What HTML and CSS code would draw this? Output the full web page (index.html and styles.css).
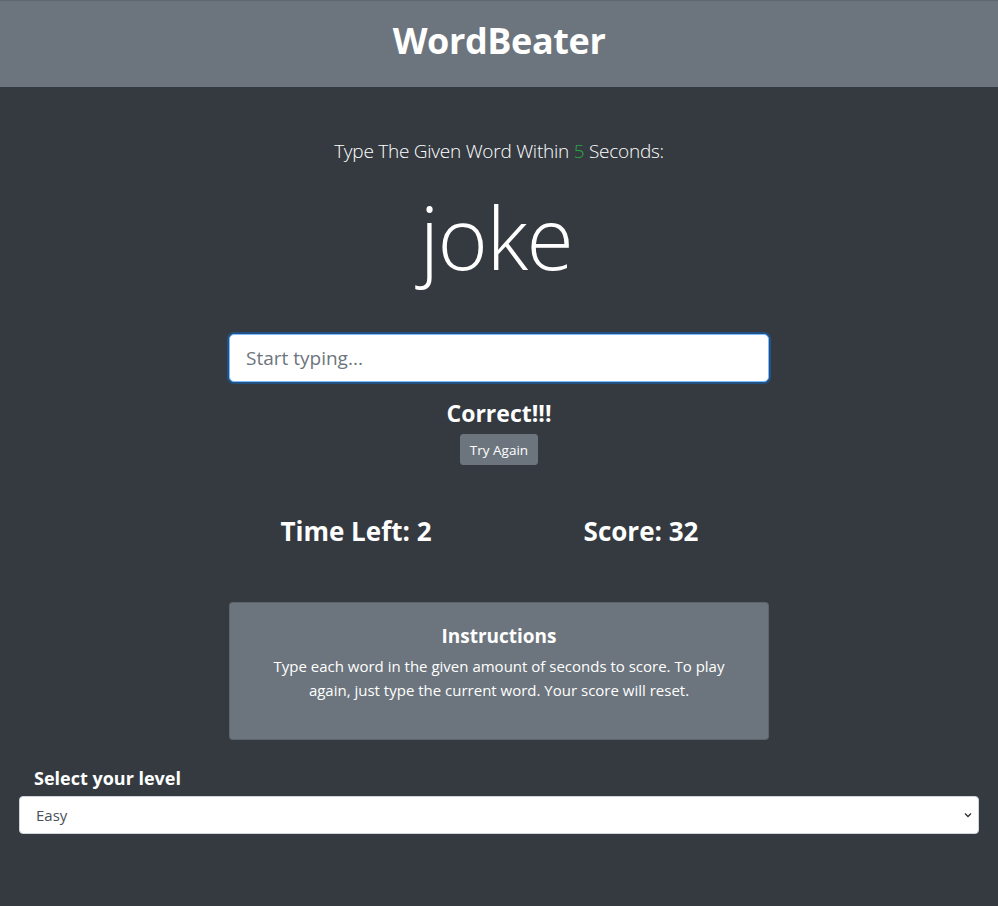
FILE: index.html
```html
<!DOCTYPE html>
<html lang="en">
<head>
<meta charset="utf-8">
<title>WordBeater</title>
<link rel="stylesheet" href="styles.css">
</head>
<body>
<header class="header">
  <h1 class="title">WordBeater</h1>
</header>
<main class="main">
  <section class="game">
    <p class="lead">Type The Given Word Within <span class="success">5</span> Seconds:</p>
    <h2 class="word">joke</h2>
    <input class="word-input" type="text" placeholder="Start typing...">
    <h4 class="message">Correct!!!</h4>
    <button class="btn" type="button">Try Again</button>
    <div class="stats">
      <h3 class="stat">Time Left: 2</h3>
      <h3 class="stat">Score: 32</h3>
    </div>
    <div class="card">
      <h5 class="card-title">Instructions</h5>
      <p class="card-text">Type each word in the given amount of seconds to score. To play again, just type the current word. Your score will reset.</p>
    </div>
  </section>
  <section class="level">
    <label class="level-label" for="level">Select your level</label>
    <div class="select-wrap">
      <select class="level-select" id="level">
        <option>Easy</option>
        <option>Medium</option>
        <option>Hard</option>
      </select>
      <svg class="chevron" width="10" height="10" viewBox="0 0 10 10"><path d="M2 3.5 L5 6.5 L8 3.5" fill="none" stroke="#333" stroke-width="1.4"/></svg>
    </div>
  </section>
</main>
</body>
</html>
```

FILE: styles.css
```css
* { box-sizing: border-box; }
html, body { margin: 0; padding: 0; }
body {
  background: #343a40;
  color: #fff;
  font-family: "Open Sans", "Noto Sans", sans-serif;
  font-size: 16px;
  line-height: 1.5;
  min-height: 906px;
}
.header {
  background: #6c757d;
  height: 87px;
  border-top: 1px solid #5f666d;
  padding-bottom: 6px;
  display: flex;
  align-items: center;
  justify-content: center;
}
.title {
  margin: 0;
  font-size: 36px;
  font-weight: 700;
  line-height: 1.2;
  letter-spacing: -0.4px;
}
.main { padding: 0 19px; }
.game {
  width: 540px;
  margin: 0 auto;
  display: flex;
  flex-direction: column;
  align-items: center;
  text-align: center;
}
.lead {
  margin: 49px 0 0;
  font-size: 19px;
  font-weight: 300;
  line-height: 30px;
  letter-spacing: -0.25px;
}
.success { color: #28a745; }
.word {
  margin: 16px 0 0;
  font-size: 86px;
  font-weight: 300;
  line-height: 110px;
  letter-spacing: -1.5px;
  transform: translateX(-3px);
}
.word-input {
  margin-top: 42px;
  width: 540px;
  height: 48px;
  padding: 8px 16px;
  font-family: inherit;
  font-size: 19px;
  color: #495057;
  background: #fff;
  border: 1px solid #80bdff;
  border-radius: 5px;
  box-shadow: 0 0 0 2px rgba(0, 123, 255, 0.35);
  outline: none;
}
.word-input::placeholder { color: #6c757d; }
.message {
  margin: 16px 0 0;
  font-size: 23px;
  font-weight: 700;
  line-height: 30px;
}
.btn {
  margin-top: 6px;
  height: 31px;
  padding: 0 9px;
  font-family: inherit;
  font-size: 13.5px;
  color: #fff;
  background: #6c757d;
  border: 1px solid #6c757d;
  border-radius: 3px;
}
.stats {
  margin-top: 46px;
  width: 540px;
  display: grid;
  grid-template-columns: 1fr 1fr;
}
.stat {
  margin: 0;
  font-size: 26px;
  font-weight: 700;
  line-height: 40px;
}
.stat:first-child { transform: translateX(-8px); }
.stat:last-child { transform: translateX(7px); }
.card {
  margin-top: 51px;
  width: 540px;
  height: 138px;
  background: #6c757d;
  border: 1px solid rgba(0, 0, 0, 0.125);
  border-radius: 4px;
  padding: 20px 36px;
}
.card-title {
  margin: 1px 0 6px;
  font-size: 19px;
  font-weight: 700;
  line-height: 24px;
}
.card-text {
  margin: 0;
  font-size: 15px;
  line-height: 24px;
}
.level { margin-top: 26px; }
.level-label {
  display: block;
  padding-left: 15px;
  margin-bottom: 6px;
  font-size: 18px;
  font-weight: 700;
  line-height: 24px;
}
.select-wrap { position: relative; }
.level-select {
  display: block;
  width: 100%;
  height: 38px;
  padding: 0 16px;
  font-family: inherit;
  font-size: 15px;
  color: #495057;
  background: #fff;
  border: 1px solid #ced4da;
  border-radius: 4px;
  appearance: none;
  -webkit-appearance: none;
}
.chevron {
  position: absolute;
  right: 6px;
  top: 14px;
  pointer-events: none;
}
```
